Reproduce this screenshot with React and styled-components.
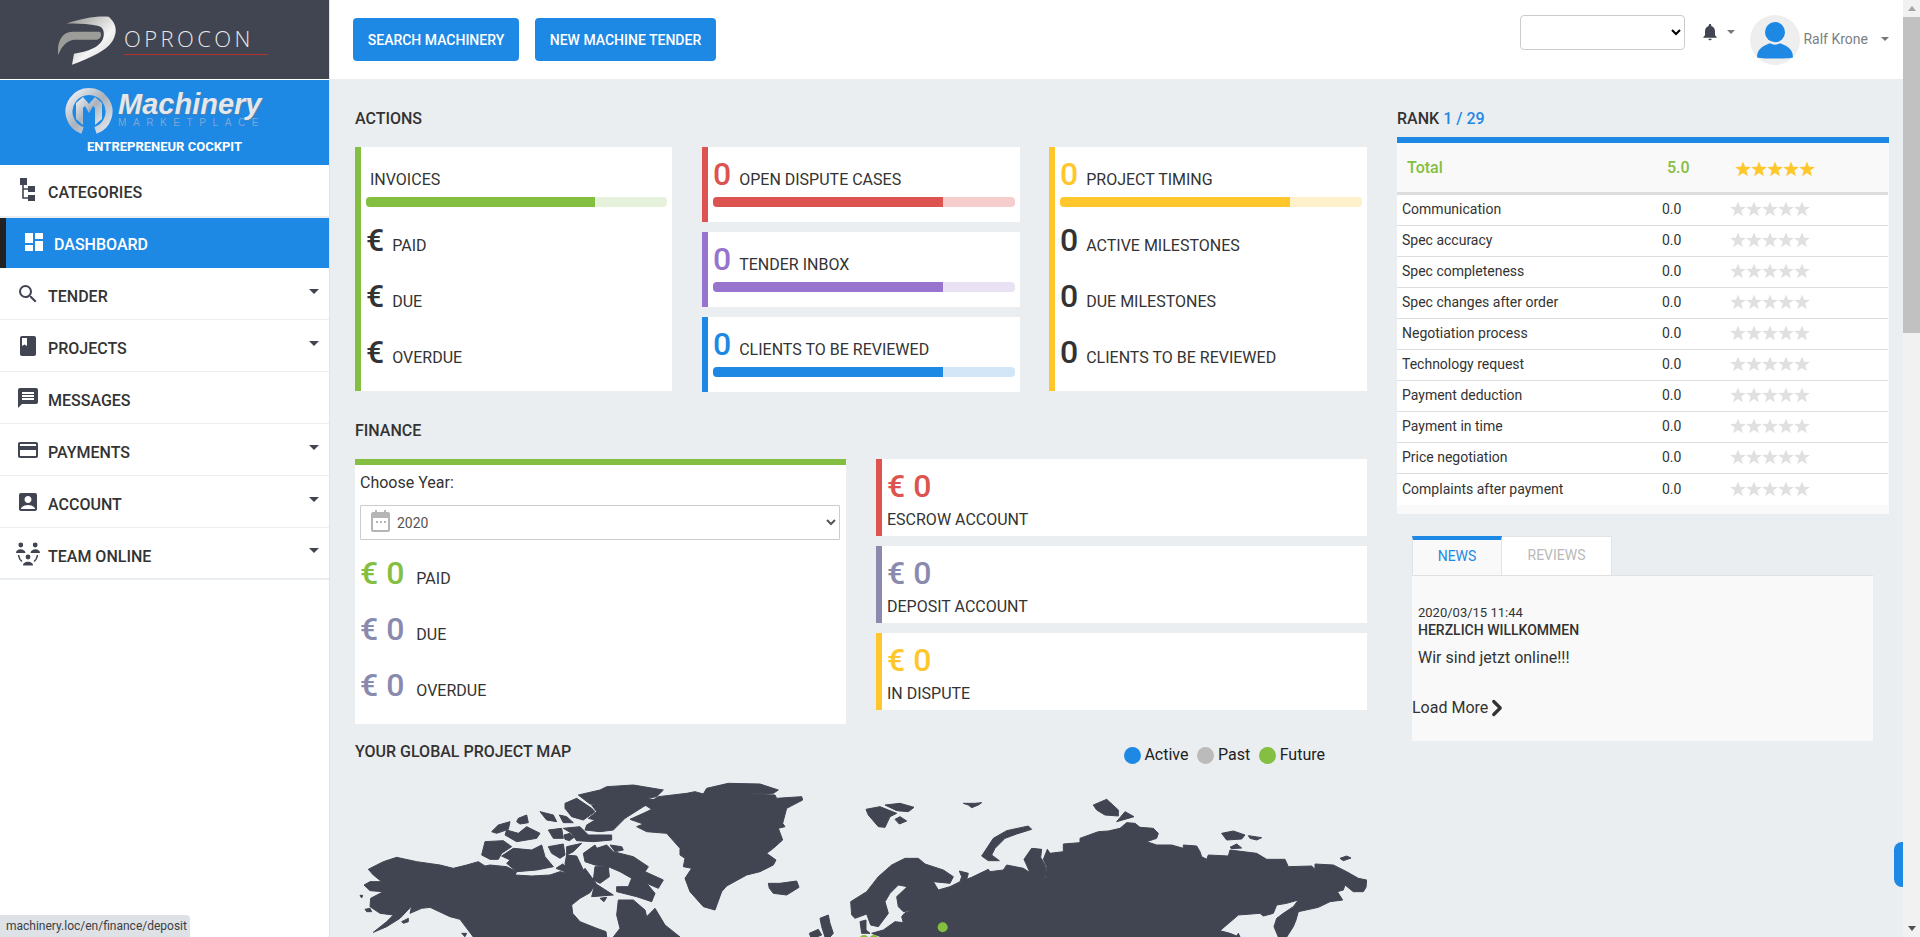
import React from "react";
import styled, { createGlobalStyle } from "styled-components";
import { ChevronRight } from "lucide-react";
import {
  MdSearch,
  MdBook,
  MdMessage,
  MdCreditCard,
  MdAccountBox,
  MdDashboard,
  MdNotifications,
} from "react-icons/md";

const blue = "#1e88e5";
const green = "#84bf41";
const red = "#dc5350";
const purple = "#9775ce";
const yellow = "#ffc72c";
const slate = "#8a8aae";
const dark = "#414451";
const ink = "#333";

const GlobalStyle = createGlobalStyle`
  html, body { margin: 0; padding: 0; height: 100%; overflow: hidden; }
  body { font-family: Roboto, "Liberation Sans", sans-serif; color: ${ink}; font-size: 16px; }
  * { box-sizing: border-box; }
`;

const Page = styled.div`
  position: relative;
  display: flex;
  height: 100vh;
  overflow: hidden;
  background: #ebeef1;
`;

/* sidebar */
const Sidebar = styled.aside`
  width: 330px;
  flex: none;
  background: #fff;
  border-right: 1px solid #dfe2e6;
`;
const BrandBar = styled.div`
  height: 80px;
  background: ${dark};
  border-bottom: 1px solid #fff;
  display: flex;
  align-items: center;
  padding-left: 57px;
  gap: 7px;
`;
const BrandWord = styled.div`
  width: 144px;
  height: 27px;
  margin-top: 3px;
  border-bottom: 1px solid #b5322f;
  color: #e8e8e8;
  font-family: "Open Sans", sans-serif;
  font-weight: 300;
  font-size: 22px;
  line-height: 20px;
  letter-spacing: 3.4px;
  white-space: nowrap;
`;
const Marketplace = styled.div`
  height: 85px;
  background: ${blue};
  color: #fff;
  padding-top: 8px;
`;
const MarketLogo = styled.div`
  display: flex;
  padding-left: 65px;
  gap: 5px;
  height: 46px;
`;
const MarketText = styled.div`
  display: flex;
  flex-direction: column;
  padding-top: 2px;
`;
const MarketWord = styled.div`
  font-family: "Liberation Sans", sans-serif;
  font-weight: 700;
  font-style: italic;
  font-size: 29px;
  line-height: 28px;
  color: #e4e8ee;
  text-shadow: 1px 1px 1px #5a7fa8;
`;
const MarketSub = styled.div`
  font-family: "Liberation Sans", sans-serif;
  font-size: 10px;
  line-height: 10px;
  letter-spacing: 6.6px;
  color: #7ea6d2;
`;
const Cockpit = styled.div`
  margin-top: 5px;
  text-align: center;
  font-size: 13px;
  font-weight: 700;
  line-height: 16px;
`;
const MenuRow = styled.div`
  display: flex;
  align-items: center;
  gap: 8px;
  height: ${(p) => (p.$active ? "50px" : p.$first ? "53px" : "52px")};
  padding: ${(p) => (p.$active ? "3px" : p.$first ? "4px" : "6px")} 10px 0 16px;
  background: ${(p) => (p.$active ? blue : "#fff")};
  color: ${(p) => (p.$active ? "#fff" : ink)};
  border-left: ${(p) => (p.$active ? "6px solid #222" : "none")};
  border-bottom: ${(p) =>
    p.$active ? "none" : p.$first || p.$last ? "2px solid #ebeef1" : "1px solid #ebeef1"};
  font-size: 16px;
  font-weight: 500;
  svg.icon {
    flex: none;
    margin-top: -5px;
    color: ${(p) => (p.$active ? "#fff" : dark)};
  }
`;
const MenuLabel = styled.span`
  flex: 1;
`;
const Caret = styled.i`
  display: inline-block;
  flex: none;
  width: 0;
  height: 0;
  border-left: ${(p) => p.$size || 5}px solid transparent;
  border-right: ${(p) => p.$size || 5}px solid transparent;
  border-top: ${(p) => p.$size || 5}px solid ${(p) => p.$color || dark};
`;
const MenuCaret = styled(Caret)`
  margin-top: -11px;
`;

/* main column */
const Main = styled.div`
  flex: 1;
  min-width: 0;
  display: flex;
  flex-direction: column;
`;
const Header = styled.header`
  height: 79px;
  flex: none;
  background: #fff;
  display: flex;
  align-items: center;
  gap: 16px;
  padding: 0 14px 0 23px;
`;
const HeaderButton = styled.button`
  height: 43px;
  width: ${(p) => p.$width}px;
  border: none;
  border-radius: 4px;
  background: ${blue};
  color: #fff;
  font-family: inherit;
  font-size: 14px;
  font-weight: 500;
`;
const HeaderRight = styled.div`
  margin-left: auto;
  display: flex;
  align-items: flex-start;
  height: 79px;
  padding-top: 15px;
`;
const TopSelect = styled.select`
  width: 165px;
  height: 35px;
  border: 1px solid #ccc;
  border-radius: 4px;
  background: #fff;
  margin-right: 18px;
`;
const Bell = styled.div`
  display: flex;
  align-items: center;
  height: 40px;
  gap: 7px;
  width: 49.5px;
  margin: -3px 0 0 -3px;
  color: ${dark};
`;
const Avatar = styled.div`
  width: 50px;
  height: 50px;
  border-radius: 50%;
  background: #eee;
  display: flex;
  align-items: center;
  justify-content: center;
`;
const UserName = styled.div`
  display: flex;
  align-items: center;
  height: 48px;
  margin-left: 3.5px;
  gap: 13px;
  color: #7a7f85;
  font-size: 14px;
`;

const Content = styled.main`
  flex: 1;
  min-height: 0;
  display: grid;
  grid-template-columns: 1012px 492px;
  column-gap: 30px;
  padding: 30px 0 0 25px;
  overflow: hidden;
`;
const Column = styled.section`
  min-width: 0;
`;
const SectionTitle = styled.h2`
  margin: 0;
  font-size: 16px;
  font-weight: 500;
  line-height: 20px;
  color: ${ink};
`;
const ActionsTitle = styled(SectionTitle)`
  margin-bottom: 18px;
`;
const FinanceTitle = styled(SectionTitle)`
  margin: 29px 0 18px;
`;
const ActionsGrid = styled.div`
  display: grid;
  grid-template-columns: repeat(3, 318px);
  column-gap: 29px;
  align-items: start;
`;
const Stack = styled.div`
  display: flex;
  flex-direction: column;
  gap: 10px;
`;
const Card = styled.div`
  background: #fff;
  border-left: 6px solid ${(p) => p.$color};
  height: ${(p) => p.$height}px;
  padding: 8px 5px 0;
  margin-right: ${(p) => (p.$trim ? 1 : 0)}px;
`;
const Metric = styled.div`
  display: flex;
  align-items: baseline;
  height: 38px;
  margin-top: ${(p) => p.$gap || 0}px;
`;
/* a row with only a label keeps the baseline of the rows with a big number */
const LabelMetric = styled(Metric)`
  &::before {
    content: "";
    display: inline-block;
    height: 30px;
  }
`;
const BigValue = styled.span`
  font-size: 32px;
  font-weight: 500;
  line-height: 38px;
  margin-right: ${(p) => p.$gap ?? 8}px;
  color: ${(p) => p.$color || ink};
  white-space: pre;
`;
const MetricLabel = styled.span`
  font-size: 16px;
  padding-left: ${(p) => p.$indent || 0}px;
  color: ${ink};
`;
const Bar = styled.div`
  height: 10px;
  margin-top: 4px;
  border-radius: 4px;
  overflow: hidden;
  background: ${(p) => p.$track};
`;
const BarFill = styled.div`
  width: 76%;
  height: 100%;
  background: ${(p) => p.$color};
`;

const FinanceGrid = styled.div`
  display: grid;
  grid-template-columns: 491px 491px;
  column-gap: 30px;
  align-items: start;
`;
const YearCard = styled.div`
  height: 265px;
  background: #fff;
  border-top: 6px solid ${green};
  padding: 8px 6px 0 5px;
`;
const YearLabel = styled.div`
  line-height: 20px;
  margin-bottom: 12px;
`;
const YearSelectWrap = styled.div`
  position: relative;
  svg {
    position: absolute;
    left: 11px;
    top: 5px;
  }
`;
const YearSelect = styled.select`
  width: 100%;
  height: 35px;
  padding-left: 32px;
  border: 1px solid #ccc;
  border-radius: 1px;
  background: #fff;
  color: #555;
  font-family: inherit;
  font-size: 14px;
`;
const YearMetrics = styled.div`
  margin-top: 14px;
  display: flex;
  flex-direction: column;
  gap: 18px;
`;
const AccountCard = styled.div`
  height: 77px;
  background: #fff;
  border-left: 6px solid ${(p) => p.$color};
  padding: 8px 5px 0;
`;
const AccountValue = styled.div`
  font-size: 32px;
  font-weight: 500;
  line-height: 38px;
  color: ${(p) => p.$color};
`;
const AccountLabel = styled.div`
  margin-top: 5px;
  line-height: 20px;
`;
const MapHead = styled.div`
  display: flex;
  justify-content: space-between;
  height: 28px;
  margin-top: 18px;
  padding-right: 42px;
`;
const Legend = styled.div`
  display: flex;
  align-items: center;
  height: 26px;
  color: #222;
  line-height: 26px;
`;
const LegendDot = styled.span`
  width: 17px;
  height: 17px;
  border-radius: 50%;
  margin: 0 3.5px 0 ${(p) => p.$gap || 0}px;
  background: ${(p) => p.$color};
`;
const WorldMap = styled.svg`
  display: block;
  width: 1012px;
  height: 167px;
`;

/* rank + news */
const RankTitle = styled(SectionTitle)`
  margin-bottom: 8px;
`;
const RankNumber = styled.span`
  color: ${blue};
`;
const RankPanel = styled.div`
  height: 377px;
  background: #f9f9f9;
  border-top: 6px solid ${blue};
`;
const TotalRow = styled.div`
  display: grid;
  grid-template-columns: 260px 68px 1fr;
  align-items: center;
  height: 52px;
  width: 491px;
  padding-left: 10px;
  border-bottom: 3px solid #ddd;
  color: ${green};
  font-weight: 500;
`;
const RankList = styled.div`
  background: #fff;
  width: 491px;
`;
const RankRow = styled.div`
  display: grid;
  grid-template-columns: 260px 68px 1fr;
  align-items: center;
  height: 31px;
  padding: 0 0 2px 5px;
  border-bottom: ${(p) => (p.$last ? "none" : "1px solid #ddd")};
  font-size: 14px;
`;
const StarRow = styled.div`
  display: flex;
  margin-top: ${(p) => p.$shift || 0}px;
`;
const News = styled.div`
  margin: 22px 0 0 15px;
  width: 461px;
`;
const Tabs = styled.div`
  display: flex;
  height: 39px;
`;
const Tab = styled.div`
  width: ${(p) => p.$width}px;
  background: ${(p) => (p.$active ? "#f9f9f9" : "#fff")};
  color: ${(p) => (p.$active ? blue : "#b9b9b9")};
  border: 1px solid #e3e3e3;
  border-top: ${(p) => (p.$active ? `4px solid ${blue}` : "1px solid #e3e3e3")};
  border-bottom: none;
  border-left: ${(p) => (p.$active ? "1px solid #e3e3e3" : "none")};
  font-size: 14px;
  text-align: center;
  line-height: ${(p) => (p.$active ? "33px" : "36px")};
`;
const NewsPanel = styled.div`
  height: 166px;
  background: #f9f9f9;
  border-top: 1px solid #e0e0e0;
  padding-top: 29px;
`;
const NewsDate = styled.div`
  padding-left: 6px;
  font-size: 13px;
  line-height: 16px;
`;
const NewsTitle = styled.div`
  padding-left: 6px;
  font-size: 14px;
  font-weight: 500;
  line-height: 18px;
`;
const NewsBody = styled.div`
  padding-left: 6px;
  margin-top: 7px;
  line-height: 24px;
`;
const LoadMore = styled.div`
  display: flex;
  align-items: center;
  margin-top: 26px;
  line-height: 24px;
`;
const MoreChevron = styled(ChevronRight)`
  margin: -4px;
`;

/* browser chrome */
const Scrollbar = styled.div`
  width: 17px;
  flex: none;
  background: #f1f1f1;
  display: flex;
  flex-direction: column;
  align-items: center;
`;
const ScrollUp = styled.i`
  flex: none;
  margin: 6px 0 6px;
  width: 0;
  height: 0;
  border-left: 4px solid transparent;
  border-right: 4px solid transparent;
  border-bottom: 5px solid #a3a3a3;
`;
const ScrollThumb = styled.div`
  width: 100%;
  height: 316px;
  background: #c1c1c1;
`;
const ScrollDown = styled.i`
  flex: none;
  margin-top: auto;
  margin-bottom: 6px;
  width: 0;
  height: 0;
  border-left: 4px solid transparent;
  border-right: 4px solid transparent;
  border-top: 5px solid #505050;
`;
const StatusBubble = styled.div`
  position: absolute;
  left: 0;
  bottom: 0;
  height: 22px;
  width: 190px;
  padding-left: 6px;
  background: #dee1e6;
  border-top-right-radius: 4px;
  color: #3c4043;
  font-size: 12px;
  line-height: 22px;
`;
const ChatTab = styled.div`
  position: absolute;
  right: 17px;
  top: 842px;
  width: 9px;
  height: 45px;
  background: ${blue};
  border-radius: 8px 0 0 8px;
`;

const OproconMark = () => (
  <svg width="60" height="50" viewBox="50 50 180 150">
    <defs>
      <linearGradient id="swoosh" x1="0" y1="0" x2="1" y2="1">
        <stop offset="0" stopColor="#8d8f8c" />
        <stop offset="0.6" stopColor="#f4f4f4" />
        <stop offset="1" stopColor="#cfd0d0" />
      </linearGradient>
    </defs>
    <path
      d="M78 76C120 60 170 52 205 55C226 72 234 98 217 127C198 158 150 178 95 199L101 166C140 160 186 146 190 112C192 94 186 86 172 82C140 76 105 74 78 76Z"
      fill="url(#swoosh)"
    />
    <path
      d="M178 100C186 106 182 122 170 124H100C76 128 62 148 54 170C48 135 64 100 95 100Z"
      fill="#9c9d98"
    />
  </svg>
);

const MachineryMark = () => (
  <svg width="48" height="46" viewBox="0 0 48 46">
    <defs>
      <linearGradient id="ring" x1="0" y1="0" x2="1" y2="1">
        <stop offset="0" stopColor="#f2f4f7" />
        <stop offset="0.5" stopColor="#a9b2bd" />
        <stop offset="1" stopColor="#e3e7ec" />
      </linearGradient>
    </defs>
    <path
      d="M17.5 42.5A20 20 0 1 1 30.5 42.5"
      fill="none"
      stroke="url(#ring)"
      strokeWidth="7"
    />
    <path
      d="M11 31V15L18 9L24 16L30 9L37 15V31L30 37V20L28 18L24 25L20 18L18 20V37Z"
      fill="url(#ring)"
    />
  </svg>
);

const TreeIcon = () => (
  <svg className="icon" width="24" height="24" viewBox="0 0 24 24" fill={dark}>
    <rect x="4" y="0" width="7" height="7" />
    <rect x="12" y="8" width="7" height="6" />
    <rect x="12" y="17" width="7" height="6" />
    <path d="M7 7V20H12M7 11H12" fill="none" stroke={dark} strokeWidth="1.6" />
  </svg>
);

const TeamIcon = () => (
  <svg className="icon" width="24" height="24" viewBox="0 0 24 24" fill={dark}>
    <circle cx="4.8" cy="3" r="2.4" />
    <circle cx="19.2" cy="3" r="2.4" />
    <circle cx="12" cy="15" r="2.4" />
    <path d="M0 11C0 6 9 6 9.5 11ZM14.5 11C15 6 24 6 24 11ZM7 23.5C7 18.5 17 18.5 17 23.5Z" />
    <path
      d="M2.5 13C3 16 4.5 18.5 6 19.5M21.5 13C21 16 19.5 18.5 18 19.5"
      fill="none"
      stroke={dark}
      strokeWidth="1.5"
    />
  </svg>
);

const CalendarIcon = () => (
  <svg width="19" height="22" viewBox="0 0 19 22" fill="#b5b5b5">
    <rect x="4" y="0" width="2" height="4" />
    <rect x="13" y="0" width="2" height="4" />
    <path d="M2 2H17A2 2 0 0 1 19 4V20A2 2 0 0 1 17 22H2A2 2 0 0 1 0 20V4A2 2 0 0 1 2 2ZM2 8V20H17V8Z" fillRule="evenodd" />
    <rect x="5" y="11" width="2" height="2" />
    <rect x="9" y="11" width="2" height="2" />
    <rect x="13" y="11" width="2" height="2" />
  </svg>
);

const Stars = ({ color, shift }) => (
  <StarRow $shift={shift}>
    {[0, 1, 2, 3, 4].map((i) => (
      <svg key={i} width="16" height="16" viewBox="0 0 16 16" fill={color}>
        <polygon points="8,0.4 10.1,5.8 15.9,6 11.3,9.6 12.9,15.3 8,12.1 3.1,15.3 4.7,9.6 0.1,6 5.9,5.8" />
      </svg>
    ))}
  </StarRow>
);

const menu = [
  { label: "CATEGORIES", icon: <TreeIcon />, first: true },
  { label: "DASHBOARD", icon: <MdDashboard className="icon" size={24} />, active: true },
  { label: "TENDER", icon: <MdSearch className="icon" size={24} />, caret: true },
  { label: "PROJECTS", icon: <MdBook className="icon" size={24} />, caret: true },
  { label: "MESSAGES", icon: <MdMessage className="icon" size={24} /> },
  { label: "PAYMENTS", icon: <MdCreditCard className="icon" size={24} />, caret: true },
  { label: "ACCOUNT", icon: <MdAccountBox className="icon" size={24} />, caret: true },
  { label: "TEAM ONLINE", icon: <TeamIcon />, caret: true, last: true },
];

const ratings = [
  "Communication",
  "Spec accuracy",
  "Spec completeness",
  "Spec changes after order",
  "Negotiation process",
  "Technology request",
  "Payment deduction",
  "Payment in time",
  "Price negotiation",
  "Complaints after payment",
];

// outlines read off the reference, in 3x pixels; x runs from the left of the map crop
const landWest = [
  "70,487 110,470 150,445 185,408 180,430 215,415 240,412 300,440 330,448 370,501 770,501 768,485 740,475 690,455 668,430 665,405 690,385 720,368 738,340 722,318 705,295 690,315 660,310 630,305 600,315 545,318 495,315 500,305 470,290 420,285 405,288 385,275 350,285 310,295 270,285 200,275 140,262 100,275 55,298 70,315 95,335 60,335 42,345 60,362 100,365 62,385 60,410 90,430 130,435 110,455",
  "790,501 810,475 800,435 805,390 850,390 885,420 890,440 915,415 945,465 990,501",
  "455,258 490,235 545,240 575,225 585,260 610,290 560,300 500,305 470,280 480,270",
  "405,215 460,212 485,230 455,250 445,268 420,268 395,255",
  "595,230 640,222 645,255 630,265 605,250",
  "650,230 695,220 670,245 650,255",
  "700,250 735,225 740,235 770,225 790,245 850,260 895,290 885,305 940,330 925,355 890,340 915,370 905,395 860,380 800,365 800,350 835,350 845,325 810,305 775,290 735,285 705,275",
  "645,280 650,255 680,258 700,300 722,320 700,340 650,320",
  "735,340 790,375 725,380",
  "750,385 770,382 762,395",
  "735,290 775,290 778,320 750,340 730,330",
  "780,225 815,230 820,240 795,245",
  "640,175 690,170 715,195 785,195 785,210 730,215 680,212 665,190",
  "685,75 750,60 770,50 850,45 940,60 920,80 890,85 920,90 880,110 825,145 790,180 750,185 705,180 710,165 735,150 715,145 740,125 725,105 760,105 720,102",
  "645,100 680,85 725,115 735,125 700,150 665,140 645,115",
  "470,180 505,190 530,170 570,190 560,205 500,215 465,195",
  "425,185 445,165 480,155 475,178 440,190",
  "505,145 530,135 535,158 510,162 500,155",
  "570,125 610,135 620,155 590,150",
  "628,135 650,140 670,158 640,158",
  "595,180 635,175 640,205 610,205",
  "642,195 660,190 672,202 658,212 645,208",
  "618,295 638,282 660,300 645,305",
  "840,148 880,130 905,118 885,105 925,80 1010,70 1035,65 1060,72 1070,55 1135,40 1230,42 1285,60 1270,70 1195,72 1275,75 1280,85 1355,80 1358,90 1310,115 1298,160 1305,170 1285,175 1298,210 1270,235 1250,250 1278,270 1270,285 1230,305 1190,315 1130,348 1115,365 1095,420 1060,410 1020,365 1005,325 1025,295 1000,290 1005,265 990,255 990,235 950,190 890,185 860,170 880,162",
  "1255,340 1290,340 1340,333 1347,352 1310,375 1270,370 1258,355",
  "30,376 38,376 35,384",
  "45,418 60,415 65,425 50,425",
  "155,455 175,445 175,455 160,460",
  "1410,445 1435,435 1440,460 1450,490 1440,501 1425,501 1415,470",
  "1378,490 1405,478 1415,495 1400,501 1382,501",
  "335,490 350,490 345,500",
];
const landEast = [
  "2,395 50,365 85,320 125,285 165,265 205,265 225,282 280,300 310,320 300,340 250,335 265,360 300,350 330,335 335,320 328,303 355,310 350,328 365,322 415,298 420,305 460,300 470,285 520,295 540,308 522,268 545,235 575,238 572,262 585,285 590,315 570,335 590,318 590,290 580,268 592,238 600,250 640,245 640,222 690,218 690,205 745,185 775,183 810,175 830,158 855,160 870,172 910,175 925,190 920,205 890,215 920,225 965,225 1000,235 1000,225 1040,228 1050,245 1055,260 1070,268 1075,255 1135,258 1140,240 1220,250 1250,268 1305,268 1315,290 1385,288 1395,298 1395,282 1450,285 1490,305 1525,325 1550,330 1548,352 1540,365 1510,365 1485,345 1480,360 1462,365 1478,390 1440,395 1405,412 1345,425 1338,450 1330,470 1310,501 1285,501 1272,470 1280,445 1300,430 1330,410 1345,390 1310,400 1280,405 1270,430 1240,438 1230,430 1165,435 1110,482 1140,490 1160,498 1165,490 1170,501 95,501 65,490 100,480 135,455 160,458 155,440 165,428 200,418 160,425 145,410 140,380 172,350 145,345 120,370 105,395 115,430 85,470 62,465 50,432 15,445 5,435",
  "30,455 48,450 48,480 60,490 35,490",
  "48,118 90,110 140,130 120,140 105,172 85,170 55,135",
  "105,105 150,100 192,112 175,125 140,122",
  "135,148 150,140 170,153 148,162",
  "340,100 375,100 395,98 385,105 365,113 355,105",
  "395,258 430,205 470,182 535,168 545,178 500,192 465,205 435,235 425,255 448,272 415,272",
  "730,105 770,88 805,120 805,138 765,135 740,120",
  "825,125 852,140 800,155",
  "1115,190 1150,183 1185,195 1175,207 1130,210",
  "1195,197 1235,203 1220,210 1200,205",
  "1140,232 1160,222 1175,234 1145,236",
  "1470,265 1490,258 1503,264 1480,272",
];

const App = () => (
  <Page>
    <GlobalStyle />
    <Sidebar>
      <BrandBar>
        <OproconMark />
        <BrandWord>OPROCON</BrandWord>
      </BrandBar>
      <Marketplace>
        <MarketLogo>
          <MachineryMark />
          <MarketText>
            <MarketWord>Machinery</MarketWord>
            <MarketSub>MARKETPLACE</MarketSub>
          </MarketText>
        </MarketLogo>
        <Cockpit>ENTREPRENEUR COCKPIT</Cockpit>
      </Marketplace>
      {menu.map((item) => (
        <MenuRow key={item.label} $active={item.active} $first={item.first} $last={item.last}>
          {item.icon}
          <MenuLabel>{item.label}</MenuLabel>
          {item.caret && <MenuCaret />}
        </MenuRow>
      ))}
    </Sidebar>

    <Main>
      <Header>
        <HeaderButton $width={166}>SEARCH MACHINERY</HeaderButton>
        <HeaderButton $width={181}>NEW MACHINE TENDER</HeaderButton>
        <HeaderRight>
          <TopSelect>
            <option></option>
          </TopSelect>
          <Bell>
            <MdNotifications size={20} />
            <Caret $size={4} $color="#777" />
          </Bell>
          <Avatar>
            <svg width="36" height="37" viewBox="0 0 36 40" preserveAspectRatio="none" fill={blue}>
              <ellipse cx="18" cy="11" rx="10" ry="11" />
              <path d="M0 38C0 28 8 25 13 23C16 25 20 25 23 23C28 25 36 28 36 38C36 40 0 40 0 38Z" />
            </svg>
          </Avatar>
          <UserName>
            Ralf Krone
            <Caret $size={4} $color="#777" />
          </UserName>
        </HeaderRight>
      </Header>

      <Content>
        <Column>
          <ActionsTitle>ACTIONS</ActionsTitle>
          <ActionsGrid>
            <Card $color={green} $height={244} $trim>
              <LabelMetric>
                <MetricLabel $indent={4}>INVOICES</MetricLabel>
              </LabelMetric>
              <Bar $track="#e7f2dc">
                <BarFill $color={green} />
              </Bar>
              <Metric $gap={14}>
                <BigValue>€</BigValue>
                <MetricLabel>PAID</MetricLabel>
              </Metric>
              <Metric $gap={18}>
                <BigValue>€</BigValue>
                <MetricLabel>DUE</MetricLabel>
              </Metric>
              <Metric $gap={18}>
                <BigValue>€</BigValue>
                <MetricLabel>OVERDUE</MetricLabel>
              </Metric>
            </Card>
            <Stack>
              <Card $color={red} $height={75}>
                <Metric>
                  <BigValue $color={red}>0</BigValue>
                  <MetricLabel>OPEN DISPUTE CASES</MetricLabel>
                </Metric>
                <Bar $track="#f5cdcc">
                  <BarFill $color={red} />
                </Bar>
              </Card>
              <Card $color={purple} $height={75}>
                <Metric>
                  <BigValue $color={purple}>0</BigValue>
                  <MetricLabel>TENDER INBOX</MetricLabel>
                </Metric>
                <Bar $track="#e9e2f4">
                  <BarFill $color={purple} />
                </Bar>
              </Card>
              <Card $color={blue} $height={75}>
                <Metric>
                  <BigValue $color={blue}>0</BigValue>
                  <MetricLabel>CLIENTS TO BE REVIEWED</MetricLabel>
                </Metric>
                <Bar $track="#d2e6f8">
                  <BarFill $color={blue} />
                </Bar>
              </Card>
            </Stack>
            <Card $color={yellow} $height={244}>
              <Metric>
                <BigValue $color={yellow}>0</BigValue>
                <MetricLabel>PROJECT TIMING</MetricLabel>
              </Metric>
              <Bar $track="#fff1c9">
                <BarFill $color={yellow} />
              </Bar>
              <Metric $gap={14}>
                <BigValue>0</BigValue>
                <MetricLabel>ACTIVE MILESTONES</MetricLabel>
              </Metric>
              <Metric $gap={18}>
                <BigValue>0</BigValue>
                <MetricLabel>DUE MILESTONES</MetricLabel>
              </Metric>
              <Metric $gap={18}>
                <BigValue>0</BigValue>
                <MetricLabel>CLIENTS TO BE REVIEWED</MetricLabel>
              </Metric>
            </Card>
          </ActionsGrid>

          <FinanceTitle>FINANCE</FinanceTitle>
          <FinanceGrid>
            <YearCard>
              <YearLabel>Choose Year:</YearLabel>
              <YearSelectWrap>
                <YearSelect>
                  <option>2020</option>
                </YearSelect>
                <CalendarIcon />
              </YearSelectWrap>
              <YearMetrics>
                <Metric>
                  <BigValue $color={green} $gap={12}>€ 0</BigValue>
                  <MetricLabel>PAID</MetricLabel>
                </Metric>
                <Metric>
                  <BigValue $color={slate} $gap={12}>€ 0</BigValue>
                  <MetricLabel>DUE</MetricLabel>
                </Metric>
                <Metric>
                  <BigValue $color={slate} $gap={12}>€ 0</BigValue>
                  <MetricLabel>OVERDUE</MetricLabel>
                </Metric>
              </YearMetrics>
            </YearCard>
            <Stack>
              <AccountCard $color={red}>
                <AccountValue $color={red}>€ 0</AccountValue>
                <AccountLabel>ESCROW ACCOUNT</AccountLabel>
              </AccountCard>
              <AccountCard $color={slate}>
                <AccountValue $color={slate}>€ 0</AccountValue>
                <AccountLabel>DEPOSIT ACCOUNT</AccountLabel>
              </AccountCard>
              <AccountCard $color={yellow}>
                <AccountValue $color={yellow}>€ 0</AccountValue>
                <AccountLabel>IN DISPUTE</AccountLabel>
              </AccountCard>
            </Stack>
          </FinanceGrid>

          <MapHead>
            <SectionTitle>YOUR GLOBAL PROJECT MAP</SectionTitle>
            <Legend>
              <LegendDot $color={blue} />
              Active
              <LegendDot $color="#bbb" $gap={9} />
              Past
              <LegendDot $color={green} $gap={9} />
              Future
            </Legend>
          </MapHead>
          <WorldMap viewBox="15 0 3036 501">
            <g fill={dark} stroke={dark} strokeWidth="3" strokeLinejoin="round">
              {landWest.map((points, i) => (
                <polygon key={i} points={points} />
              ))}
              <g transform="translate(1500 0)">
                {landEast.map((points, i) => (
                  <polygon key={i} points={points} />
                ))}
              </g>
            </g>
            <g fill={green} transform="translate(1500 0)">
              <circle cx="278" cy="472" r="15" />
              <circle cx="42" cy="510" r="15" />
              <circle cx="72" cy="510" r="15" />
            </g>
          </WorldMap>
        </Column>

        <Column>
          <RankTitle>
            RANK <RankNumber>1 / 29</RankNumber>
          </RankTitle>
          <RankPanel>
            <TotalRow>
              <span>Total</span>
              <span>5.0</span>
              <Stars color={yellow} shift={2} />
            </TotalRow>
            <RankList>
              {ratings.map((name, i) => (
                <RankRow key={name} $last={i === ratings.length - 1}>
                  <span>{name}</span>
                  <span>0.0</span>
                  <Stars color="#e0e0e0" />
                </RankRow>
              ))}
            </RankList>
          </RankPanel>
          <News>
            <Tabs>
              <Tab $active $width={90}>NEWS</Tab>
              <Tab $width={110}>REVIEWS</Tab>
            </Tabs>
            <NewsPanel>
              <NewsDate>2020/03/15 11:44</NewsDate>
              <NewsTitle>HERZLICH WILLKOMMEN</NewsTitle>
              <NewsBody>Wir sind jetzt online!!!</NewsBody>
              <LoadMore>
                Load More
                <MoreChevron size={26} strokeWidth={3} />
              </LoadMore>
            </NewsPanel>
          </News>
        </Column>
      </Content>
    </Main>

    <Scrollbar>
      <ScrollUp />
      <ScrollThumb />
      <ScrollDown />
    </Scrollbar>
    <ChatTab />
    <StatusBubble>machinery.loc/en/finance/deposit</StatusBubble>
  </Page>
);

export default App;
